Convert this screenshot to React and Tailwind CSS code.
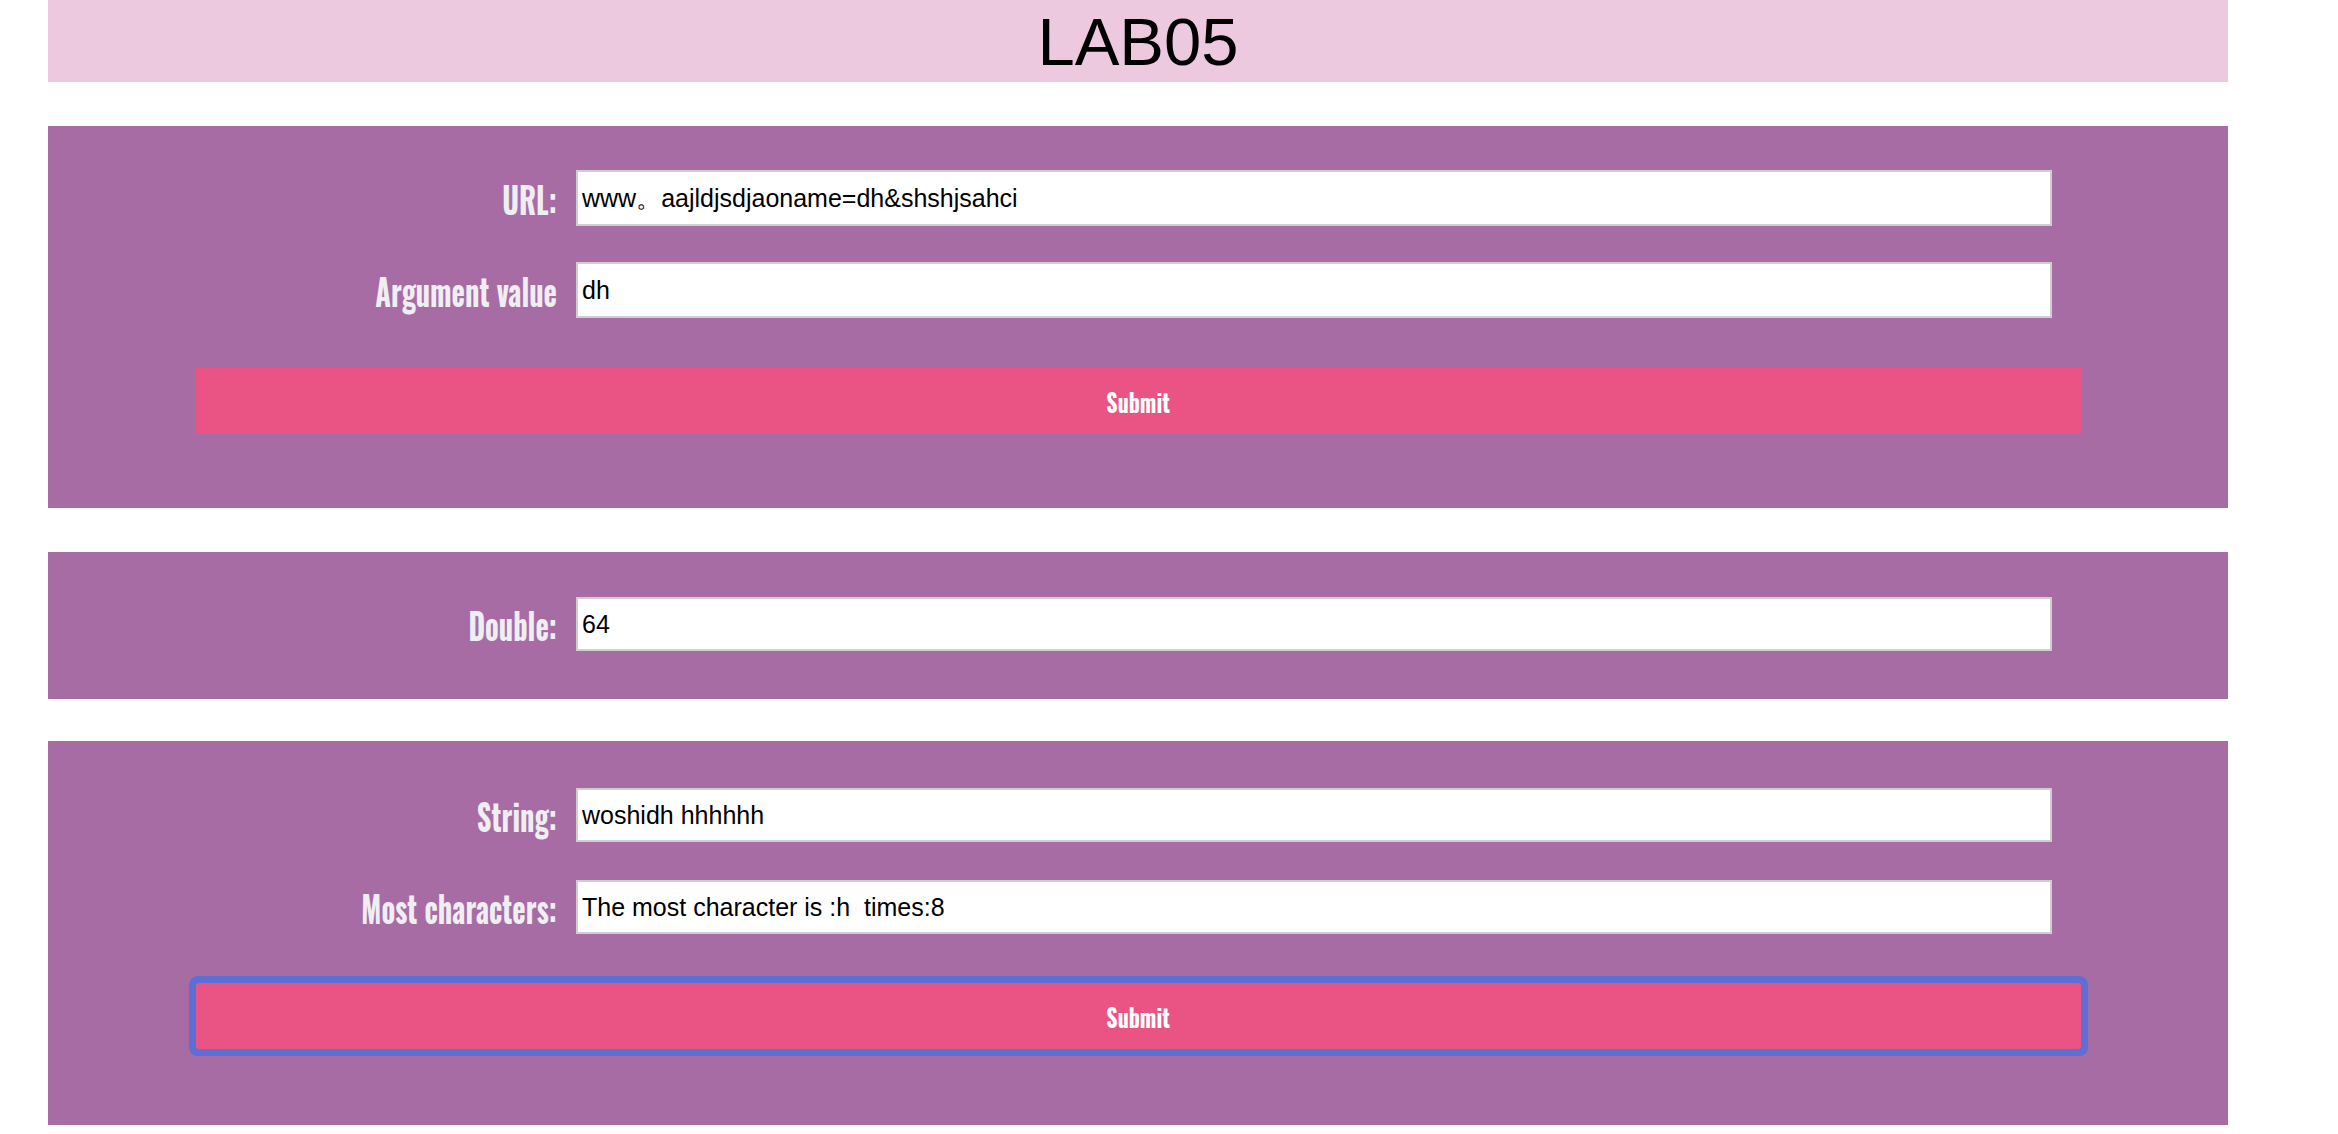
import React from 'react';

const labelFont = { fontFamily: '"Oswald", "DejaVu Sans Condensed", "Liberation Sans", sans-serif' };

function Row({ label, value, tall = true }) {
    return (
        <div className="flex items-center">
            <div className="w-[509px] flex justify-end">
                <label
                    className="inline-block whitespace-nowrap origin-right scale-x-[0.77] text-[37px] leading-none text-[#efeef3] font-bold"
                    style={labelFont}
                >
                    {label}
                </label>
            </div>
            <input
                readOnly
                value={value}
                className={
                    'ml-[19px] w-[1476px] bg-white border-2 border-[#cfcfcf] px-[4px] text-[25px] text-black font-[\'Liberation_Sans\',sans-serif] outline-none ' +
                    (tall ? 'h-[56px]' : 'h-[54px]')
                }
            />
        </div>
    );
}

function SubmitButton({ focused }) {
    return (
        <button
            className={
                'flex items-center justify-center mx-auto w-[1885px] h-[66px] bg-[#ea5484] text-white ' +
                (focused ? 'rounded-[3px] shadow-[0_0_0_7px_#5d6fd4]' : '')
            }
        >
            <span className="inline-block scale-x-[0.88] text-[25px] font-bold leading-none" style={labelFont}>
                Submit
            </span>
        </button>
    );
}

export default function App() {
    return (
        <div className="w-[2338px] h-[1134px] bg-white font-['Liberation_Sans',sans-serif]">
            <div className="ml-[48px] w-[2180px]">
                <header className="h-[82px] bg-[#ecc9df] flex items-center justify-center">
                    <h1 className="text-[67px] leading-none text-black">LAB05</h1>
                </header>

                <section className="mt-[44px] bg-[#a76ca4] pt-[44px] pb-[74px]">
                    <div className="flex flex-col gap-[36px]">
                        <Row label="URL:" value="www。aajldjsdjaoname=dh&shshjsahci" />
                        <Row label="Argument value" value="dh" />
                    </div>
                    <div className="mt-[50px]">
                        <SubmitButton />
                    </div>
                </section>

                <section className="mt-[44px] bg-[#a76ca4] pt-[45px] pb-[48px]">
                    <Row label="Double:" value="64" tall={false} />
                </section>

                <section className="mt-[42px] bg-[#a76ca4] pt-[47px] pb-[76px]">
                    <div className="flex flex-col gap-[38px]">
                        <Row label="String:" value="woshidh hhhhhh" tall={false} />
                        <Row label="Most characters:" value="The most character is :h  times:8" tall={false} />
                    </div>
                    <div className="mt-[49px]">
                        <SubmitButton focused />
                    </div>
                </section>
            </div>
        </div>
    );
}
